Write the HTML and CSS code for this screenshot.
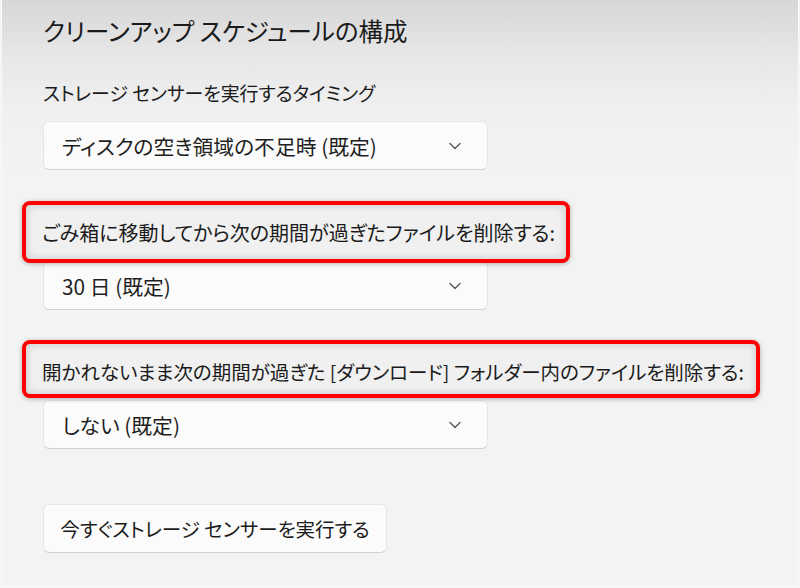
FILE: index.html
```html
<!DOCTYPE html>
<html lang="ja">
<head>
<meta charset="utf-8">
<title>クリーンアップ スケジュールの構成</title>
<link rel="stylesheet" href="styles.css">
</head>
<body>
<div class="window">
  <main class="page">
    <h1 class="title">クリーンアップ スケジュールの構成</h1>

    <div class="label label-timing">ストレージ センサーを実行するタイミング</div>
    <div class="select">
      <span class="select-text">ディスクの空き領域の不足時 (既定)</span>
      <svg class="chevron" width="12" height="8" viewBox="0 0 12 8"><polyline points="1,1.5 6,6.5 11,1.5" fill="none" stroke="#5a5a5a" stroke-width="1.4" stroke-linecap="round" stroke-linejoin="round"/></svg>
    </div>

    <div class="label highlight highlight-one">ごみ箱に移動してから次の期間が過ぎたファイルを削除する:</div>
    <div class="select select-under">
      <span class="select-text">30 日 (既定)</span>
      <svg class="chevron" width="12" height="8" viewBox="0 0 12 8"><polyline points="1,1.5 6,6.5 11,1.5" fill="none" stroke="#5a5a5a" stroke-width="1.4" stroke-linecap="round" stroke-linejoin="round"/></svg>
    </div>

    <div class="label highlight highlight-two">開かれないまま次の期間が過ぎた [ダウンロード] フォルダー内のファイルを削除する:</div>
    <div class="select select-under-two">
      <span class="select-text">しない (既定)</span>
      <svg class="chevron" width="12" height="8" viewBox="0 0 12 8"><polyline points="1,1.5 6,6.5 11,1.5" fill="none" stroke="#5a5a5a" stroke-width="1.4" stroke-linecap="round" stroke-linejoin="round"/></svg>
    </div>

    <button class="button" type="button">今すぐストレージ センサーを実行する</button>
  </main>
</div>
</body>
</html>
```

FILE: styles.css
```css
html, body {
  margin: 0;
  padding: 0;
}

body {
  width: 800px;
  height: 588px;
  overflow: hidden;
  background: #f3f3f3;
  font-family: "Noto Sans CJK JP", "Noto Sans", sans-serif;
  font-feature-settings: "palt";
  color: #1b1b1b;
}

.window {
  box-sizing: border-box;
  width: 798px;
  height: 587px;
  margin-left: 1px;
  border-left: 1px solid #fbfbfb;
  border-right: 1px solid #fbfbfb;
  border-bottom: 1px solid #fbfbfb;
  background: linear-gradient(to bottom, #d6d6d6 0px, #e6e6e6 50px, #f0f0f0 110px, #f3f3f3 170px, #f3f3f3 100%);
}

.page {
  padding: 13px 0 0 40px;
}

.title {
  margin: 0 0 0 1px;
  font-size: 24.5px;
  font-weight: 400;
  line-height: 36px;
  height: 36px;
  white-space: nowrap;
}

.label {
  margin-top: 26px;
  margin-left: 1px;
  font-size: 19.5px;
  line-height: 36px;
  height: 36px;
  white-space: nowrap;
}

.label-timing {
  font-size: 18.9px;
}

.select {
  box-sizing: border-box;
  position: relative;
  width: 445px;
  height: 49px;
  margin-top: 10px;
  margin-left: 1px;
  padding: 0 26px 0 18px;
  display: flex;
  align-items: center;
  justify-content: space-between;
  background: #fbfbfb;
  border: 1px solid #e6e6e6;
  border-bottom-color: #d2d2d2;
  border-radius: 6px;
  font-size: 20.8px;
  color: #1f1f1f;
}

.select-text {
  white-space: nowrap;
}

.chevron {
  display: block;
}

.highlight {
  box-sizing: border-box;
  position: relative;
  z-index: 1;
  margin-left: -20px;
  margin-top: 31px;
  height: 62px;
  padding: 10px 12px 7px 16px;
  border: 4px solid #ff0000;
  border-radius: 8px;
  background: #f0f0f0;
  box-shadow: 0 1px 5px rgba(0, 0, 0, 0.28), inset 0 0 8px rgba(0, 0, 0, 0.18);
}

.highlight-one {
  width: 548px;
  font-size: 20px;
}

.highlight-two {
  width: 738px;
  height: 58px;
  margin-top: 30px;
  padding-bottom: 3px;
}

.select-under {
  margin-top: -2px;
}

.select-under-two {
  margin-top: 2px;
}

.button {
  box-sizing: border-box;
  display: block;
  width: 344px;
  height: 49px;
  margin: 55px 0 0 1px;
  padding: 0;
  background: #fbfbfb;
  border: 1px solid #e6e6e6;
  border-bottom-color: #d2d2d2;
  border-radius: 6px;
  font-family: inherit;
  font-feature-settings: "palt";
  font-size: 19.5px;
  color: #1b1b1b;
  text-align: center;
}
```
